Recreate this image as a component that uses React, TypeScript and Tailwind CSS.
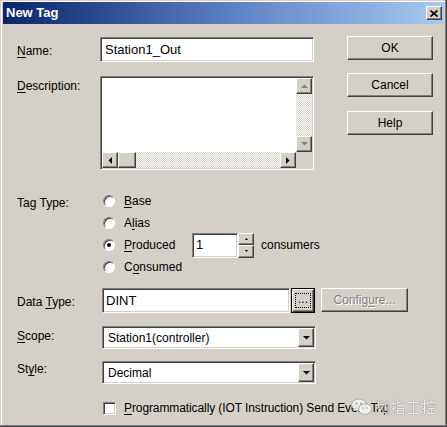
import React from "react";

const sunken =
  "border border-t-[#808080] border-l-[#808080] border-b-white border-r-white shadow-[inset_1px_1px_0_#404040,inset_-1px_-1px_0_#d4d0c8]";
const raised =
  "border border-t-white border-l-white border-b-[#404040] border-r-[#404040] shadow-[inset_-1px_-1px_0_#808080,inset_1px_1px_0_#d4d0c8] bg-[#d4d0c8]";
const track =
  "bg-[repeating-conic-gradient(#d4d0c8_0_25%,#ffffff_0_50%)] bg-[length:2px_2px]";

const Arrow = ({ dir, color = "#000" }: { dir: "up" | "down" | "left" | "right"; color?: string }) => {
  const pts = {
    up: "0,4 7,4 3.5,0.5",
    down: "0,0 7,0 3.5,3.5",
    left: "4,0 4,7 0.5,3.5",
    right: "0,0 0,7 3.5,3.5",
  }[dir];
  const vert = dir === "up" || dir === "down";
  return (
    <svg width={vert ? 7 : 4} height={vert ? 4 : 7} viewBox={vert ? "0 0 7 4" : "0 0 4 7"}>
      <polygon points={pts} fill={color} />
    </svg>
  );
};

const ScrollBtn = ({ dir, disabled }: { dir: "up" | "down" | "left" | "right"; disabled?: boolean }) => (
  <div className={`w-4 h-4 shrink-0 flex items-center justify-center ${raised}`}>
    <Arrow dir={dir} color={disabled ? "#808080" : "#000"} />
  </div>
);

const U = ({ children }: { children: React.ReactNode }) => <span className="underline underline-offset-2">{children}</span>;

const Radio = ({ checked }: { checked?: boolean }) => (
  <div className="w-3 h-3 rounded-full border border-t-[#808080] border-l-[#808080] border-b-white border-r-white shadow-[inset_1px_1px_0_#404040] bg-white flex items-center justify-center shrink-0">
    {checked && <div className="w-1 h-1 rounded-full bg-black" />}
  </div>
);

const Button = ({ children }: { children: React.ReactNode }) => (
  <div className={`w-[86px] h-[24px] flex items-center justify-center ${raised}`}>{children}</div>
);

const Select = ({ value }: { value: string }) => (
  <div className={`w-[214px] h-[23px] bg-white p-px flex ${sunken}`}>
    <div className="flex-1 flex items-center pl-[4px]">{value}</div>
    <div className={`w-4 h-full flex items-center justify-center ${raised}`}>
      <Arrow dir="down" />
    </div>
  </div>
);

export default function App() {
  return (
    <div className="w-[447px] h-[427px] overflow-hidden bg-[#d4d0c8] relative pt-[2px] px-[3px] font-['Liberation_Sans',Arial,sans-serif] text-[12px] text-black shadow-[inset_-1px_-1px_0_#404040,inset_-2px_-2px_0_#808080,inset_1px_1px_0_#d4d0c8,inset_2px_2px_0_#ffffff]">
      {/* title bar */}
      <div className="h-[22px] flex items-center justify-between pl-[3px] pr-[2px] bg-gradient-to-r from-[#0a246a] via-[#5a7fc0] to-[#a6caf0]">
        <span className="text-white font-bold text-[13px]">New Tag</span>
        <div className={`w-4 h-[14px] flex items-center justify-center ${raised}`}>
          <svg width="8" height="7" viewBox="0 0 8 7">
            <path d="M0.5 0.5 L7.5 6.5 M7.5 0.5 L0.5 6.5" stroke="#000" strokeWidth="1.6" />
          </svg>
        </div>
      </div>

      <div className="pl-[14px]">
        {/* top section */}
        <div className="flex">
          <div className="flex flex-col">
            <div className="flex mt-[13px]">
              <div className="w-[83px] pt-[5px]"><U>N</U>ame:</div>
              <div className={`w-[214px] h-[25px] bg-white flex items-center pl-[4px] text-[13px] ${sunken}`}>Station1_Out</div>
            </div>
            <div className="flex mt-[14px]">
              <div className="w-[83px] pt-[1px]"><U>D</U>escription:</div>
              <div className={`w-[214px] h-[94px] bg-white p-px flex flex-col ${sunken}`}>
                <div className="flex-1 flex">
                  <div className="flex-1" />
                  <div className="w-4 flex flex-col">
                    <ScrollBtn dir="up" disabled />
                    <div className={`flex-1 ${track}`} />
                    <ScrollBtn dir="down" disabled />
                  </div>
                </div>
                <div className="h-4 flex">
                  <div className="flex-1 flex">
                    <ScrollBtn dir="left" />
                    <div className={`w-[18px] h-4 ${raised}`} />
                    <div className={`flex-1 ${track}`} />
                    <ScrollBtn dir="right" />
                  </div>
                  <div className="w-4 bg-[#d4d0c8]" />
                </div>
              </div>
            </div>
          </div>
          <div className="ml-[33px] flex flex-col">
            <div className="mt-[12px]"><Button>OK</Button></div>
            <div className="mt-[13px]"><Button>Cancel</Button></div>
            <div className="mt-[14px]"><Button>Help</Button></div>
          </div>
        </div>

        {/* tag type */}
        <div className="flex mt-[20px]">
          <div className="w-[86px] pt-[4px]">Tag Type:</div>
          <div className="flex flex-col">
            <div className="h-[22px] flex items-center">
              <Radio />
              <span className="ml-[9px]"><U>B</U>ase</span>
            </div>
            <div className="h-[22px] flex items-center">
              <Radio />
              <span className="ml-[9px]">A<U>l</U>ias</span>
            </div>
            <div className="h-[22px] flex items-center">
              <Radio checked />
              <span className="ml-[9px] w-[68px]"><U>P</U>roduced</span>
              <div className="flex h-[25px] -my-[2px]">
                <div className={`w-[46px] h-[25px] bg-white flex items-center pl-[3px] text-[13px] ${sunken}`}>1</div>
                <div className="w-4 flex flex-col">
                  <div className={`flex-1 flex items-center justify-center ${raised}`}>
                    <svg width="3" height="2" viewBox="0 0 3 2"><polygon points="0,2 3,2 1.5,0" fill="#000" /></svg>
                  </div>
                  <div className={`flex-1 flex items-center justify-center ${raised}`}>
                    <svg width="3" height="2" viewBox="0 0 3 2"><polygon points="0,0 3,0 1.5,2" fill="#000" /></svg>
                  </div>
                </div>
              </div>
              <span className="ml-[7px]">consumers</span>
            </div>
            <div className="h-[22px] flex items-center">
              <Radio />
              <span className="ml-[9px]">C<U>o</U>nsumed</span>
            </div>
          </div>
        </div>

        {/* data type */}
        <div className="flex mt-[10px]">
          <div className="w-[85px] pt-[5px]">Data <U>T</U>ype:</div>
          <div className={`w-[188px] h-[25px] bg-white flex items-center pl-[3px] text-[13px] ${sunken}`}>DINT</div>
          <div className="ml-px w-[24px] h-[25px] border border-black flex">
            <div className={`flex-1 flex items-center justify-center ${raised}`}>
              <div className="w-[16px] h-[15px] border border-dotted border-black flex items-center justify-center leading-none pb-[3px]">...</div>
            </div>
          </div>
          <div className={`ml-[6px] w-[87px] h-[24px] flex items-center justify-center text-[#808080] [text-shadow:1px_1px_0_#ffffff] ${raised}`}>
            Config<U>u</U>re...
          </div>
        </div>

        {/* scope */}
        <div className="flex mt-[13px]">
          <div className="w-[85px] pt-[1px]"><U>S</U>cope:</div>
          <Select value="Station1(controller)" />
        </div>

        {/* style */}
        <div className="flex mt-[12px]">
          <div className="w-[85px] -mt-[1px]">St<U>y</U>le:</div>
          <Select value="Decimal" />
        </div>

        {/* checkbox */}
        <div className="flex items-center mt-[15px] pl-[86px]">
          <div className={`w-[13px] h-[13px] bg-white ${sunken}`} />
          <span className="ml-[8px] whitespace-nowrap tracking-[-0.1px]"><U>P</U>rogrammatically (IOT Instruction) Send Event Tag</span>
        </div>
      </div>

      {/* watermark */}
      <div className="absolute left-[351px] top-[396px] flex items-center opacity-90">
        <svg width="22" height="18" viewBox="0 0 22 18">
          <ellipse cx="8" cy="7" rx="7.5" ry="6" fill="#f2f2f2" stroke="#9a9a9a" strokeWidth="0.8" />
          <ellipse cx="14" cy="11" rx="6.5" ry="5.2" fill="#f8f8f8" stroke="#9a9a9a" strokeWidth="0.8" />
          <circle cx="5.5" cy="5.5" r="1" fill="#999" />
          <circle cx="10" cy="5.5" r="1" fill="#999" />
          <circle cx="12" cy="10" r="0.8" fill="#999" />
          <circle cx="16" cy="10" r="0.8" fill="#999" />
        </svg>
        <span className="ml-[2px] text-[15px] tracking-[0.5px] text-[#f0f0f0] font-['Noto_Sans_CJK_SC',sans-serif] [text-shadow:0_0_1px_#777,0_0_1px_#777]">划指工控</span>
      </div>
    </div>
  );
}
